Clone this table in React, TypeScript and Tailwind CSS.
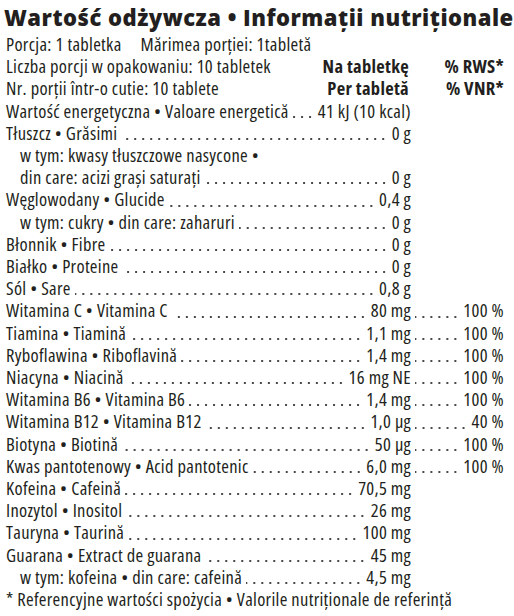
type Row = {
  label: string;
  value?: string;
  pct?: string;
  indent?: boolean;
  noDots?: boolean;
};

const rows: Row[] = [
  { label: "Tłuszcz • Grăsimi", value: "0 g" },
  { label: "w tym: kwasy tłuszczowe nasycone •", indent: true, noDots: true },
  { label: "din care: acizi grași saturați", value: "0 g", indent: true },
  { label: "Węglowodany • Glucide", value: "0,4 g" },
  { label: "w tym: cukry • din care: zaharuri", value: "0 g", indent: true },
  { label: "Błonnik • Fibre", value: "0 g" },
  { label: "Białko • Proteine", value: "0 g" },
  { label: "Sól • Sare", value: "0,8 g" },
  { label: "Witamina C • Vitamina C", value: "80 mg", pct: "100 %" },
  { label: "Tiamina • Tiamină", value: "1,1 mg", pct: "100 %" },
  { label: "Ryboflawina • Riboflavină", value: "1,4 mg", pct: "100 %" },
  { label: "Niacyna • Niacină", value: "16 mg NE", pct: "100 %" },
  { label: "Witamina B6 • Vitamina B6", value: "1,4 mg", pct: "100 %" },
  { label: "Witamina B12 • Vitamina B12", value: "1,0 µg", pct: "40 %" },
  { label: "Biotyna • Biotină", value: "50 µg", pct: "100 %" },
  { label: "Kwas pantotenowy • Acid pantotenic", value: "6,0 mg", pct: "100 %" },
  { label: "Kofeina • Cafeină", value: "70,5 mg" },
  { label: "Inozytol • Inositol", value: "26 mg" },
  { label: "Tauryna • Taurină", value: "100 mg" },
  { label: "Guarana • Extract de guarana", value: "45 mg" },
  { label: "w tym: kofeina • din care: cafeină", value: "4,5 mg", indent: true },
];

function Dots() {
  return (
    <span className="mx-[4px] flex-1 self-stretch bg-[radial-gradient(circle,#4a4a4a_0.9px,transparent_1.3px)] bg-[length:8px_4px] bg-[position:right_0_bottom_3px] bg-repeat-x" />
  );
}

export default function App() {
  return (
    <main className="h-[616px] w-[514px] overflow-hidden bg-white text-[#231f20]">
      <h1 className="pl-[4px] pt-[2px] font-['Open_Sans',sans-serif] text-[22px] leading-[30px] font-extrabold tracking-[0.5px] whitespace-nowrap">
        Wartość odżywcza • Informații nutriționale
      </h1>
      <div className="pl-[6px] pr-[10px] pt-[1px] font-['Open_Sans',sans-serif] text-[18.5px] leading-[22.2px] tracking-[0.3px] font-stretch-condensed whitespace-nowrap">
        <div className="flex gap-[19px]">
          <span>Porcja: 1 tabletka</span>
          <span>Mărimea porției: 1tabletă</span>
        </div>
        <div className="flex">
          <span className="flex-1">Liczba porcji w opakowaniu: 10 tabletek</span>
          <span className="font-bold">Na tabletkę</span>
          <span className="w-[95px] text-right font-bold">% RWS*</span>
        </div>
        <div className="flex">
          <span className="flex-1">Nr. porții într-o cutie: 10 tablete</span>
          <span className="font-bold">Per tabletă</span>
          <span className="w-[95px] text-right font-bold">% VNR*</span>
        </div>
        <div className="flex">
          <div className="flex w-[405px]">
            <span>Wartość energetyczna • Valoare energetică</span>
            <Dots />
            <span>41 kJ (10 kcal)</span>
          </div>
        </div>
        {rows.map((r) => (
          <div key={r.label} className="flex">
            <div className={`flex w-[405px] ${r.indent ? "pl-[14px]" : ""}`}>
              <span>{r.label}</span>
              {!r.noDots && <Dots />}
              {r.value && <span>{r.value}</span>}
            </div>
            {r.pct && (
              <div className="flex w-[93px]">
                <Dots />
                <span>{r.pct}</span>
              </div>
            )}
          </div>
        ))}
        <div>* Referencyjne wartości spożycia • Valorile nutriționale de referință</div>
      </div>
    </main>
  );
}
